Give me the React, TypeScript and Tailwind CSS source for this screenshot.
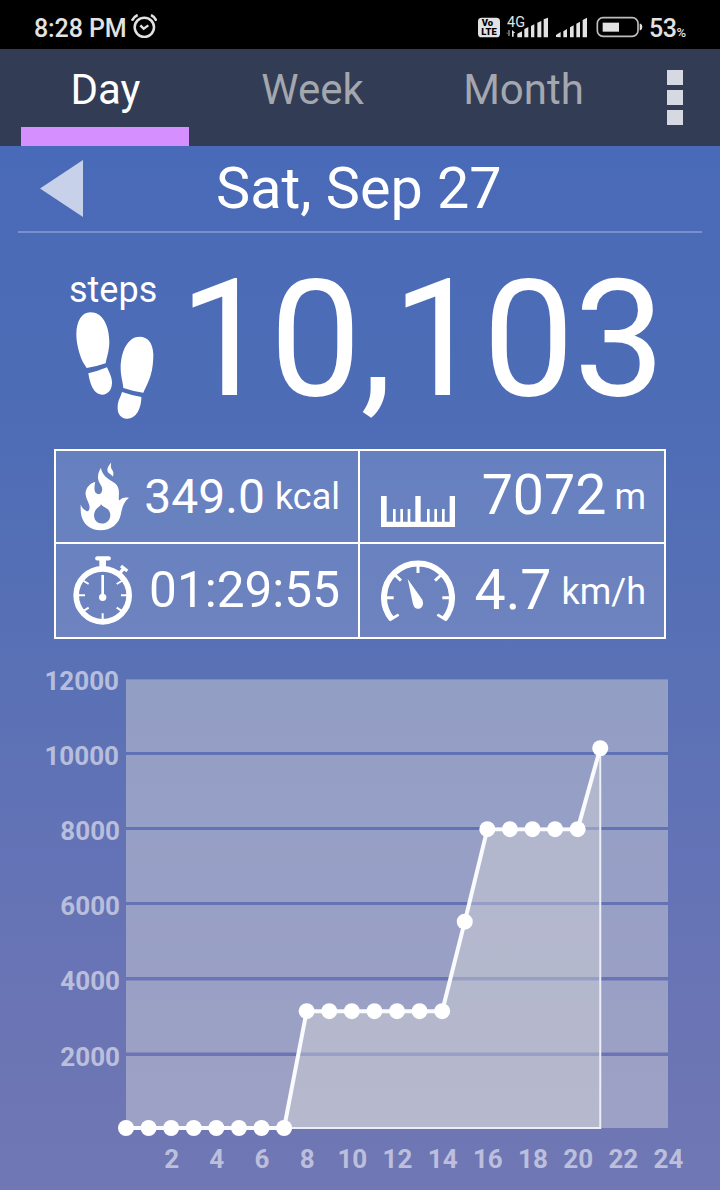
import React from "react";

const tabs = [
  { name: "Day", active: true, width: "w-[168px]" },
  { name: "Week", active: false, width: "w-[246px]" },
  { name: "Month", active: false, width: "w-[176px]" },
];

// cumulative steps by hour, 0h - 21h
const hourly = [
  0, 0, 0, 0, 0, 0, 0, 0, 3120, 3120, 3120, 3120, 3120, 3120, 3120, 5510, 7980,
  7980, 7980, 7980, 7980, 10140,
];

const yLabels = [12000, 10000, 8000, 6000, 4000, 2000];
const xLabels = [2, 4, 6, 8, 10, 12, 14, 16, 18, 20, 22, 24];

const AlarmIcon: React.FC = () => (
  <svg width="26" height="24" viewBox="394 42 78 72" fill="none" stroke="#e2e2e2">
    <circle cx="434" cy="82" r="29" strokeWidth="7.5" />
    <path d="M397 62 Q402 50 414 45M454 45 Q465 50 470 62" strokeWidth="7.5" />
    <path d="M422 76 L432 86 L446 76" strokeWidth="7" />
  </svg>
);

const StatusIcons: React.FC = () => (
  <svg width="166" height="25" viewBox="54 40 498 75" fill="#e2e2e2">
    <rect x="54" y="51" width="66" height="59" rx="11" />
    <g fill="#000" fontFamily="Roboto, sans-serif" fontWeight="900">
      <text x="65" y="77" fontSize="25" textLength="34" lengthAdjust="spacingAndGlyphs">
        Vo
      </text>
      <text x="64" y="102" fontSize="25" textLength="46" lengthAdjust="spacingAndGlyphs">
        LTE
      </text>
    </g>
    <text
      x="141"
      y="79"
      fontSize="44"
      textLength="54"
      lengthAdjust="spacingAndGlyphs"
      fontFamily="Roboto, sans-serif"
      fontWeight="400"
    >
      4G
    </text>
    <path d="M144 88h6v18h-6zM138 96h8l4 10z" fill="#666" />
    <path d="M156 88l10 9h-5v11h-5z" />
    <path d="M172 99l14-7v18h-14zM193 85l12-6v31h-12zM213 76l10-5v39h-10zM232 66l12-5v49h-12zM251 56l13-5v59h-13z" />
    <path d="M288 109v-6l14-9v16zM310 92l11-7v25h-11zM330 80l11-6v36h-11zM349 69l11-6v47h-11zM368 58l13-7v59h-13z" />
    <rect x="412" y="51" width="122" height="56" rx="17" fill="none" stroke="#bdbdbd" strokeWidth="5" />
    <rect x="428" y="66" width="49" height="27" />
    <path d="M539 69h3q5 2 5 10t-5 10h-3z" />
  </svg>
);

const FootprintsIcon: React.FC = () => (
  <svg width="78" height="107" viewBox="77 157 234 321" fill="#fff">
    <path d="M120 158C94 158 79 184 78 222C78 252 86 276 92 294C97 308 105 317 109 325Q138 321 166 311C168 295 176 280 177 248C177 198 157 158 120 158Z" />
    <path d="M114 341Q144 334 170 323C177 340 186 354 185 371C184 392 172 405 156 405C130 405 119 373 114 341Z" />
    <path d="M268 231C234 231 212 271 211 325C211 352 218 366 219 385Q248 395 279 399C287 381 294 370 301 347C307 327 309 305 309 284C308 250 292 231 268 231Z" />
    <path d="M215 397Q244 407 273 412C273 445 259 478 229 477C211 476 201 462 202 442C202 424 210 414 215 397Z" />
  </svg>
);

const FlameIcon: React.FC = () => (
  <svg width="49" height="69" viewBox="88 68 148 206" fill="#fff">
    <path d="M182 68C175 77 169 85 171 94C173 102 184 104 187 111C192 101 187 93 183 87C180 81 182 75 182 68Z" />
    <path
      fillRule="evenodd"
      d="M151 84C144 97 141 106 143 119C145 132 156 139 155 151C154 161 147 166 140 163C129 158 131 143 134 127C120 130 107 143 105 158C103 176 117 191 117 204C116 214 112 218 106 214C99 210 93 204 90 195C90 209 89 224 96 240C105 261 124 273 149 273C182 273 206 253 211 226C214 210 219 188 236 175C223 172 213 176 207 183C203 178 207 165 205 151C202 132 188 128 174 118C160 108 154 98 151 84ZM151 194C155 202 162 202 170 208C181 216 182 231 176 241C165 257 143 256 134 242C126 229 132 210 145 202C149 200 151 198 151 194Z"
    />
  </svg>
);

const StopwatchIcon: React.FC = () => (
  <svg width="60" height="69" viewBox="68 350 180 207" fill="none" stroke="#fff">
    <circle cx="157" cy="468" r="79.5" strokeWidth="17" />
    <path d="M141 357H175" strokeWidth="13" strokeLinecap="round" />
    <path d="M157 360V388" strokeWidth="20" />
    <path d="M212 380L231 395M207 403L220 388" strokeWidth="10" />
    <path d="M157 407V472" strokeWidth="8" />
    <circle cx="157" cy="474" r="11" fill="#fff" stroke="none" />
    <path
      d="M84 468H104M212 468H232M157 522V542M100 425L115 434M214 425L199 434M101 514L115 505M213 514L199 505"
      strokeWidth="6"
    />
  </svg>
);

const RulerIcon: React.FC = () => (
  <svg width="74" height="31" viewBox="93 168 222 93" fill="#fff">
    <path d="M93 168h17v77h86v-77h16v77h87v-77h16v93H93z" />
    <path d="M129 207h8v40h-8zM151 207h8v40h-8zM173 207h8v40h-8zM231 207h8v40h-8zM253 207h8v40h-8zM276 207h8v40h-8z" />
  </svg>
);

const GaugeIcon: React.FC = () => (
  <svg width="74" height="62" viewBox="93 361 222 186" fill="none" stroke="#fff">
    <path d="M125 538A102 102 0 1 1 283 538" strokeWidth="18" />
    <path d="M204 376V400M104 474H131M277 474H304M135 406L153 423M273 406L255 423" strokeWidth="9" />
    <path d="M119 541L146 525M289 541L262 525" strokeWidth="8" />
    <path d="M173 418L216 479C222 491 219 504 208 507C197 509 191 502 189 493Z" fill="#fff" stroke="none" />
  </svg>
);

const StepsChart: React.FC = () => {
  const left = 126;
  const bottom = 468;
  const px = (h: number) => left + h * 22.583;
  const py = (v: number) => bottom - (v * 74.9) / 2000;
  const line = hourly.map((v, h) => `${px(h)},${py(v)}`).join(" ");

  return (
    <svg width="720" height="530" viewBox="0 0 720 530" className="block">
      {/* horizontal bands, with the page showing between them */}
      {[20, 95, 170, 245, 320.5, 396].map((y) => (
        <rect
          key={y}
          x={left}
          y={y}
          width="542"
          height="72"
          fill="#cbcbd6"
          fillOpacity="0.5"
        />
      ))}
      <rect x={left} y="19" width="542" height="1" fill="#fff" fillOpacity="0.2" />
      <polygon
        points={`${px(0)},${bottom} ${line} ${px(21)},${bottom}`}
        fill="#d8d8d8"
        fillOpacity="0.42"
      />
      <path
        d={`M${px(21)} ${py(10140)}V${bottom}H${px(7)}`}
        fill="none"
        stroke="#eceef8"
        strokeWidth="2"
      />
      <polyline points={line} fill="none" stroke="#fafbff" strokeWidth="4" />
      {hourly.map((v, h) => (
        <circle key={h} cx={px(h)} cy={py(v)} r="8" fill="#fff" />
      ))}
      <g
        fill="#e0e1ee"
        fillOpacity="0.7"
        fontFamily="Roboto, sans-serif"
        fontWeight="700"
        fontSize="26"
      >
        {yLabels.map((v, i) => (
          <text key={v} x={v >= 10000 ? 119 : 120} y={29.6 + i * 75.2} textAnchor="end">
            {v}
          </text>
        ))}
        {xLabels.map((h) => (
          <text key={h} x={px(h) + 0.5} y="508" textAnchor="middle">
            {h}
          </text>
        ))}
      </g>
    </svg>
  );
};

const App: React.FC = () => {
  return (
    <div className="flex h-[1190px] w-[720px] flex-col overflow-hidden bg-[linear-gradient(180deg,#496ab8_12%,#4f6db6_38%,#5a71b5_57%,#6473b6_74%,#6c75b4_88%,#7077b4_100%)] font-['Roboto',sans-serif] text-white">
      {/* Status bar */}
      <div className="flex h-[49px] shrink-0 items-center bg-black pt-[7px] pl-[34px] text-[25px] leading-none font-medium text-[#e2e2e2]">
        <span className="w-[97px] pt-px tracking-[-0.1px] whitespace-nowrap">8:28 PM</span>
        <div className="pb-[4px]">
          <AlarmIcon />
        </div>
        <div className="ml-[321px] pb-[3px]">
          <StatusIcons />
        </div>
        <div className="ml-[5px] flex items-baseline pt-px">
          <span className="tracking-[-0.5px]">53</span>
          <span className="text-[13px]">%</span>
        </div>
      </div>

      {/* Tabs */}
      <div className="flex h-[97px] shrink-0 bg-[#323c54] pl-[21px]">
        {tabs.map((tab) => (
          <button
            key={tab.name}
            className={`flex h-full flex-col items-center ${tab.width} ${
              tab.active ? "text-white" : "text-[#a4a7ae]"
            }`}
          >
            <span className="h-[78px] pl-px text-[42px] leading-[81px]">{tab.name}</span>
            {tab.active && <span className="h-[19px] w-full bg-[#d58fff]" />}
          </button>
        ))}
        <button className="ml-[56px] flex flex-col gap-[5px] pt-[21px]">
          <span className="h-[15px] w-4 bg-[#d6d9e1]" />
          <span className="h-[15px] w-4 bg-[#d6d9e1]" />
          <span className="h-[15px] w-4 bg-[#d6d9e1]" />
        </button>
      </div>

      {/* Date */}
      <div className="mx-[18px] flex h-[87px] shrink-0 items-center border-b-2 border-[#7990cb] pl-[22px]">
        <svg width="43" height="57" viewBox="0 0 43 57" fill="#c8d1ea">
          <path d="M0 28.5L43 0V57Z" />
        </svg>
        <h1 className="ml-[133px] text-[57.5px] leading-[84px] whitespace-nowrap">Sat, Sep 27</h1>
      </div>

      {/* Steps */}
      <div className="flex h-[216px] shrink-0 pl-[69px]">
        <div className="flex w-[110px] flex-col pt-[37px]">
          <span className="text-[36px] leading-[40px]">steps</span>
          <div className="pt-[2px] pl-[7px]">
            <FootprintsIcon />
          </div>
        </div>
        <span className="text-[163px] leading-[214px] tracking-[-0.8px] whitespace-nowrap">10,103</span>
      </div>

      {/* Summary */}
      <div className="mx-[54px] grid h-[190px] shrink-0 grid-cols-[302px_304px] grid-rows-[91px_93px] gap-[2px] border-2 border-white bg-white/13">
        <div className="flex items-center justify-between pr-[18px] pl-[24px] outline-2 outline-white">
          <FlameIcon />
          <div className="flex items-center gap-[10px] pt-px whitespace-nowrap">
            <span className="text-[48px] leading-none">349.0</span>
            <span className="text-[36px] leading-none">kcal</span>
          </div>
        </div>
        <div className="flex items-center justify-between pr-[18px] pl-[21px] outline-2 outline-white">
          <div className="pt-[30px]">
            <RulerIcon />
          </div>
          <div className="flex items-center gap-[8px] whitespace-nowrap">
            <span className="pb-px text-[55.5px] leading-none">7072</span>
            <span className="text-[36px] leading-none">m</span>
          </div>
        </div>
        <div className="flex items-center justify-between pr-[18px] pl-[17px] outline-2 outline-white">
          <StopwatchIcon />
          <span className="text-[49.5px] leading-none">01:29:55</span>
        </div>
        <div className="flex items-center justify-between pr-[18px] pl-[21px] outline-2 outline-white">
          <GaugeIcon />
          <div className="flex items-center gap-[10px] whitespace-nowrap">
            <span className="text-[55.5px] leading-none">4.7</span>
            <span className="pt-[2px] text-[36px] leading-none">km/h</span>
          </div>
        </div>
      </div>

      {/* Chart */}
      <div className="mt-[21px] shrink-0">
        <StepsChart />
      </div>
    </div>
  );
};

export default App;
